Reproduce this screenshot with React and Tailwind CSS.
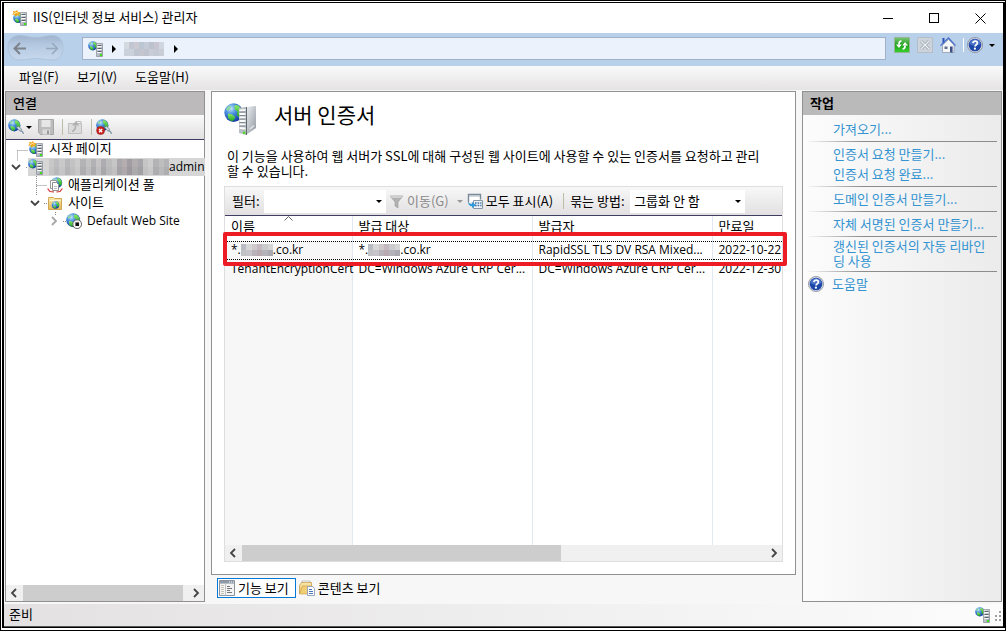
import React, { useState } from "react";
import { clsx } from "clsx";

// Shared gradients, referenced by the icons below
const IconDefs = () => (
  <svg width="0" height="0" className="absolute" aria-hidden="true">
    <defs>
      <radialGradient id="sea" cx="35%" cy="28%" r="75%">
        <stop offset="0" stopColor="#c4e8fc" />
        <stop offset="0.4" stopColor="#4a90e0" />
        <stop offset="1" stopColor="#1238a0" />
      </radialGradient>
      <linearGradient id="land" x1="0" y1="0" x2="0" y2="1">
        <stop offset="0" stopColor="#8de868" />
        <stop offset="1" stopColor="#1fa526" />
      </linearGradient>
      <linearGradient id="steel" x1="0" y1="0" x2="1" y2="1">
        <stop offset="0" stopColor="#eef1f4" />
        <stop offset="1" stopColor="#8f979f" />
      </linearGradient>
      <linearGradient id="gold" x1="0" y1="0" x2="0" y2="1">
        <stop offset="0" stopColor="#fbe9ae" />
        <stop offset="1" stopColor="#e4bb5c" />
      </linearGradient>
      <linearGradient id="leaf" x1="0" y1="0" x2="0" y2="1">
        <stop offset="0" stopColor="#7cc576" />
        <stop offset="0.5" stopColor="#1fa01c" />
        <stop offset="1" stopColor="#35d22c" />
      </linearGradient>
      <linearGradient id="pill" x1="0" y1="0" x2="0" y2="1">
        <stop offset="0" stopColor="#9fb4cc" />
        <stop offset="0.35" stopColor="#b3c8e0" />
        <stop offset="1" stopColor="#c6d8ed" />
      </linearGradient>
    </defs>
  </svg>
);

const Icon = ({ size = 16, children }) => (
  <svg width={size} height={size} viewBox="0 0 16 16" className="shrink-0" aria-hidden="true">
    {children}
  </svg>
);

const Globe = ({ x = 0, y = 0, scale = 1 }) => (
  <g transform={`translate(${x} ${y}) scale(${scale})`}>
    <circle cx="6" cy="6" r="5.8" fill="url(#sea)" />
    <path d="M6.6 1.2l2.4.3 2 2.2.6 2.3-.6 2.4-1.6.8-1.4-1.800.4-2-1.800-1.600z" fill="url(#land)" />
    <path d="M2.400 6.600l2.400.4 2.200 1.600-.8 2.400-2 .2-1.600-1.800z" fill="url(#land)" />
    <path d="M1.200 3.800L3 1.800l1.600.2L3.800 4l-1.600.8z" fill="#8fd9a0" />
  </g>
);

const ServerBox = () => (
  <g>
    <path d="M8.500 2.500h6v13h-6z" fill="url(#steel)" stroke="#858d96" strokeWidth="0.700" />
    <path d="M9.500 4.500h4M9.500 7.500h4M9.500 10.500h4" stroke="#5a626b" />
    <path d="M9.500 5.500h4M9.500 8.500h4M9.500 11.500h4" stroke="#fff" />
    <path d="M12 13h2v2h-2z" fill="#3fe01a" />
  </g>
);

const ServerIcon = () => (
  <Icon>
    <Globe scale={0.8} />
    <ServerBox />
  </Icon>
);

const HomeServerIcon = () => (
  <Icon>
    <Globe x={1} y={2.500} scale={0.9} />
    <path d="M0 4.600L1.600 3 1 .8l2.200.8L5 0l1 2 2.400.2L7 4.400l.4 1.400-2-.6-2 1.400-.6-1.800z" fill="#f2a51d" />
    <path d="M2 3.600l2.600-1.200 1.600 1" stroke="#fff0b5" fill="none" />
    <ServerBox />
  </Icon>
);

const ConnectIcon = ({ error }) => (
  <Icon>
    <Globe scale={1.05} />
    <path d="M8.400 8.400l2.200-1.200 3 3-1.400 2.200z" fill="#ccd7e0" stroke="#64788c" strokeWidth="0.700" />
    <path d="M12.600 11.600c2 .4 2.600 1.600 2.800 3.400" stroke="#8195a6" strokeWidth="1.200" fill="none" />
    {error && (
      <g>
        <circle cx="4.600" cy="11.600" r="4" fill="#c9221c" stroke="#8d1411" strokeWidth="0.500" />
        <path d="M3 10l3.200 3.200M6.200 10L3 13.200" stroke="#fff" strokeWidth="1.300" />
      </g>
    )}
  </Icon>
);

const SaveIcon = () => (
  <Icon>
    <path d="M.5.500h15v15h-13l-2-2z" fill="#bcbcbc" stroke="#a6a6a6" />
    <path d="M3.500 1h9v7h-9z" fill="#e6e6e6" />
    <path d="M4.500 10.500h7.500v5H4.500z" fill="#dcdcdc" />
    <path d="M9 11.500h2v3.500H9z" fill="#999" />
  </Icon>
);

const FolderUpIcon = () => (
  <Icon>
    <path d="M1.500 4.500h13v10h-13z" fill="#dcdcdc" stroke="#bfbfbf" />
    <path d="M9 2.500h5v2" stroke="#bfbfbf" fill="none" />
    <path d="M5 12.500c2.400-1 3.600-3 3.600-6" stroke="#b0b0b0" strokeWidth="1.600" fill="none" />
    <path d="M5 6.500L9 2l3 4.500z" fill="#b0b0b0" />
  </Icon>
);

const PoolIcon = () => (
  <Icon>
    <Globe x={4} y={0} scale={0.95} />
    <path d="M3.500 3.500h6v8h-6z" fill="#fff" stroke="#9a9a9a" />
    <path d="M5.500 5.500h4l2 2v6h-6z" fill="#fff" stroke="#8f8f8f" />
    <path d="M7 9.500h3M7 11.500h3" stroke="#bbb" />
    <path d="M.6 11.500L3 14.500l4 .5M15.400 11.500L13 14.500 9.500 15" stroke="#cf2b2b" strokeWidth="1.200" fill="none" />
  </Icon>
);

const SitesIcon = () => (
  <Icon>
    <path d="M1.500 3.500v-1h5l1 1h7v11h-13z" fill="url(#gold)" stroke="#d0a551" />
    <path d="M2.500 5.500h11" stroke="#fff4cf" />
    <Globe x={4.600} y={6} scale={0.65} />
  </Icon>
);

const StoppedSiteIcon = () => (
  <Icon>
    <Globe scale={1.200} />
    <circle cx="11.200" cy="11.200" r="4.400" fill="#f4f4f4" stroke="#555" strokeWidth="0.900" />
    <path d="M9.400 9.400h3.600v3.600H9.400z" fill="#111" />
  </Icon>
);

const HelpIcon = () => (
  <Icon>
    <circle cx="8" cy="8" r="7.600" fill="#d5d8de" stroke="#6e7686" strokeWidth="0.600" />
    <circle cx="8" cy="8" r="6.300" fill="#1d47a8" />
    <path d="M2.400 7a5.700 5.700 0 0 1 11.200 0C10 9 6 9 2.400 7z" fill="#4a72c8" />
    <path d="M5.900 6.200c.2-1.400 1.100-2 2.300-2 1.300 0 2.200.7 2.200 1.800 0 1.700-2.200 1.700-2.400 3.500" stroke="#fff" strokeWidth="1.700" fill="none" />
    <circle cx="7.900" cy="11.700" r="1.100" fill="#fff" />
  </Icon>
);

const RefreshIcon = () => (
  <Icon>
    <path d="M.5.500h15v15H.5z" fill="url(#leaf)" stroke="#93b593" />
    <path d="M7.500 4c-2 0-2.600 1-2.600 3.500M8.500 12c2 0 2.600-1 2.600-3.500" stroke="#fff" strokeWidth="1.700" fill="none" />
    <path d="M2 7.500h5.800L4.900 11zM8.200 8.500H14L11.100 5z" fill="#fff" />
  </Icon>
);

const StopIcon = () => (
  <Icon>
    <path d="M.5.500h15v15H.5z" fill="#ccd3da" stroke="#b5bec8" />
    <path d="M4 4l8 8M12 4l-8 8" stroke="#98a2ad" strokeWidth="2.800" />
    <path d="M4 4l8 8M12 4l-8 8" stroke="#f0f2f4" strokeWidth="1.300" />
  </Icon>
);

const HomeIcon = () => (
  <Icon>
    <path d="M2.500 1v6h2V1z" fill="#2b50b8" />
    <path d="M2.500 8L8.500 2.500 14 8v7.500H2.500z" fill="#f5f6f8" stroke="#8992a0" strokeWidth="0.700" />
    <path d="M.5 8.600L8.500 1l7 7.600" stroke="#4a70cc" strokeWidth="1.300" fill="none" />
    <path d="M4.500 9.500h3V12h-3z" fill="#65718a" />
    <path d="M10 9.500h2.600v6H10z" fill="#3c4f86" />
  </Icon>
);

const FunnelIcon = () => (
  <Icon>
    <path d="M1 3h13l-5 6v6l-3-2V9z" fill="#b2b2b2" stroke="#9b9b9b" strokeWidth="0.600" />
    <ellipse cx="7.500" cy="3.500" rx="6.300" ry="1.600" fill="#d0d0d0" />
  </Icon>
);

const ShowAllIcon = () => (
  <Icon>
    <path d="M1.500 9.500v-8h12v5" fill="#fff" stroke="#7b8a98" strokeWidth="1.400" />
    <path d="M2 3h11" stroke="#a5b1bc" />
    <path d="M6.500 7.500h9v8h-9z" fill="#eef2f6" stroke="#8796a4" />
    <path d="M8 10h1.600m1 0h1.600m1 0h1.300M8 12.500h1.600m1 0h1.600m1 0h1.300" stroke="#3c6da5" strokeWidth="1.400" />
    <path d="M1 9c.4 3 2 4.200 4 4.200V15l4-3-4-3v1.800C3.400 10.800 2 10.400 1 9z" fill="#2e9ad8" />
  </Icon>
);

const FeaturesIcon = () => (
  <Icon>
    <path d="M.5.500h15v15H.5z" fill="#f4f4f4" stroke="#8b949d" />
    <path d="M1 1h14v2.600H1z" fill="#8d9aa8" />
    <path d="M10 2h1m1 0h1m1 0h1" stroke="#fff" />
    <path d="M2 5.500h3M2 7.500h3M2 9.500h3M2 11.500h3M2 13.500h3" stroke="#c4c0b4" />
    <path d="M6.500 4v11.500" stroke="#c3c3c3" />
    <path d="M8 6.500h3M8 8.500h5M8 10.500h3M8 12.500h5" stroke="#777" />
  </Icon>
);

const ContentIcon = () => (
  <Icon>
    <path d="M3 1h8v5H3z" fill="#fff" stroke="#aaa" strokeWidth="0.700" />
    <path d="M.5 5.500l2-3h10v11h-12z" fill="url(#gold)" stroke="#c09541" strokeWidth="0.700" />
    <path d="M3.500 6h10l-3 8H.6z" fill="#f0ce74" stroke="#c9a04c" strokeWidth="0.600" />
    <path d="M8.500 6.500h5l2 2v7h-7z" fill="#fff" stroke="#7f93b5" strokeWidth="0.800" />
    <path d="M10 9.500h3M10 11.500h4M10 13.500h4" stroke="#4876bb" />
  </Icon>
);

const CertificatesIcon = () => (
  <svg width="36" height="36" viewBox="0 0 36 36" className="shrink-0" aria-hidden="true">
    <Globe x={0} y={1} scale={1.600} />
    <path d="M22 5l10-1v22l-10 7z" fill="url(#steel)" />
    <path d="M15 6l7-1v28l-7-2z" fill="#b6bdc4" />
    <path d="M15.500 8.500l6-.5M15.500 12h6M15.500 15.500h6M15.500 19h6M15.500 22.500h6M15.500 26l6 .5" stroke="#fbfcfc" strokeWidth="1.800" />
    <path d="M15.500 10h6M15.500 13.500h6M15.500 17h6M15.500 20.500h6M15.500 24h6" stroke="#727b84" strokeWidth="0.800" />
    <path d="M22.500 5v28" stroke="#5f676f" />
    <path d="M19 29.500h2.500V32H19z" fill="#57d82a" />
    <path d="M26 27l4-3.500" stroke="#e3e6e9" strokeWidth="1.500" />
  </svg>
);

const Caret = ({ right, muted }) => (
  <svg
    width={right ? 4 : 6}
    height={right ? 8 : 3}
    viewBox={right ? "0 0 4 8" : "0 0 6 3"}
    className={clsx("pointer-events-none shrink-0", muted ? "fill-[#999]" : "fill-black")}
    aria-hidden="true"
  >
    <path d={right ? "M0 0l4 4-4 4z" : "M0 0h6L3 3z"} />
  </svg>
);

const Chevron = ({ path, color = "#444" }) => (
  <svg width="10" height="10" viewBox="0 0 10 10" className="shrink-0" aria-hidden="true">
    <path d={path} stroke={color} strokeWidth="1.800" fill="none" />
  </svg>
);

const LEFT = "M7 1L3 5l4 4";
const RIGHT = "M3 1l4 4-4 4";
const DOWN = "M1 3l4 4 4-4";

const Divider = () => <span className="h-4 w-px shrink-0 bg-[#bdbda6]" />;

// Pixelated strip that hides a private name
const Mosaic = ({ colors, cell, className }) => (
  <svg
    viewBox={`0 0 ${(colors.length / 2) * cell} ${cell * 2}`}
    preserveAspectRatio="none"
    shapeRendering="crispEdges"
    className={clsx("shrink-0", className)}
    aria-hidden="true"
  >
    {colors.map((color, i) => (
      <rect key={i} x={Math.floor(i / 2) * cell} y={(i % 2) * cell} width={cell} height={cell} fill={color} />
    ))}
  </svg>
);

const pathColors = ["#d5d9e0", "#cbd1da", "#c1c6d1", "#cbd1da", "#cbc9d2", "#bfc5d0", "#bcc6d3", "#c4c5cf", "#c6ccd7", "#bfc3ce", "#bdc3ce", "#c8ccd6", "#c8c5d0", "#c3cad4", "#d0d6df", "#c8cdd6"];
const serverColors = [
  "#c8c8c8", "#c4c4c4", "#bdbdbf", "#b9b9bb", "#c9c9ca", "#c5c5c6", "#b8b7ba", "#b4b3b6", "#c3c3c4", "#bfbfc0",
  "#cccccc", "#c8c8c8", "#b3b2b5", "#aeadb1", "#c4c3c4", "#bebdbf", "#b2b1b4", "#acabaf", "#c6c5c6", "#c0bfc1",
  "#aeacb0", "#a8a7ab", "#bebdbe", "#b9b8ba", "#c7c6c7", "#c2c1c2", "#a9a7ac", "#a4a2a7", "#b4aeb1", "#aea8ac",
  "#a29da3", "#9c989e", "#b1adb0", "#aca9ac", "#a6a5a9", "#a1a0a5", "#c5c5c6", "#c1c1c2", "#cdcdcd", "#c9c9c9",
  "#b3b2b5", "#adacb0", "#bfbebf", "#b9b8ba", "#b4b3b5", "#aeadb0",
];
const nameColors = ["#b9bdc3", "#c2c1c3", "#d7d7d8", "#c6c4c8", "#d0c9cc", "#b9b2ba", "#c3b9be", "#b9a9b0", "#cbcbcd", "#b5b3ba", "#d5d5d6", "#aaa9b2"];

const HScrollbar = ({ thumbClass }) => (
  <div className="flex h-4 shrink-0 items-center bg-[#f0f0f0]">
    <button type="button" aria-label="왼쪽으로 스크롤" className="flex w-4 justify-center">
      <Chevron path={LEFT} />
    </button>
    <div className="h-full flex-1 px-px">
      <div className={clsx("h-full bg-[#cdcdcd]", thumbClass)} />
    </div>
    <button type="button" aria-label="오른쪽으로 스크롤" className="flex w-4 justify-center">
      <Chevron path={RIGHT} />
    </button>
  </div>
);

const TitleBar = () => (
  <header className="flex h-[30px] shrink-0 items-center bg-white pl-2">
    <HomeServerIcon />
    <h1 className="ml-[5px] flex-1 pb-0.5">IIS(인터넷 정보 서비스) 관리자</h1>
    <button type="button" aria-label="최소화" className="flex h-full w-[46px] items-center justify-center">
      <span className="h-px w-2.5 bg-black" />
    </button>
    <button type="button" aria-label="최대화" className="flex h-full w-[46px] items-center justify-center">
      <span className="size-2.5 border border-black" />
    </button>
    <button type="button" aria-label="닫기" className="flex h-full w-[46px] items-center justify-center">
      <svg width="11" height="11" viewBox="0 0 11 11" aria-hidden="true">
        <path d="M.5.500l10 10M10.500.500l-10 10" stroke="#000" />
      </svg>
    </button>
  </header>
);

const AddressBar = () => (
  <nav className="flex h-[33px] shrink-0 items-start bg-[#b9d0ea] pt-1 pr-2 pl-0.5">
    <button type="button" aria-label="뒤로 및 앞으로" className="-mt-1 shrink-0">
      <svg width="60" height="28" viewBox="0 0 60 28" aria-hidden="true">
        <path
          d="M14 2.500C5 2.500 2 8 2 14.500S6 27 14 27c6 0 9-1.500 16-1.500S40 27 46 27c8 0 11-6 11-12.500S54 2.500 46 2.500c-6 0-9 2-16 2s-10-2-16-2z"
          fill="url(#pill)"
          stroke="#aabfd8"
          strokeWidth="0.800"
        />
        <path d="M20 15.500H9M14 10L8.500 15.500l5.500 5.500" stroke="#7d838c" strokeWidth="2" fill="none" />
        <path d="M40 15.500h11M46 10l5.500 5.500L46 21" stroke="#97a8bd" strokeWidth="1.500" fill="none" />
      </svg>
    </button>
    <div className="ml-4 flex h-[23px] min-w-0 flex-1 items-center border border-[#9fb2c9] bg-[#ebf2fb] pl-[5px]">
      <ServerIcon />
      <span className="ml-2 flex"><Caret right /></span>
      <Mosaic colors={pathColors} cell={5} className="ml-2 h-3.5 w-10" />
      <span className="ml-2.5 flex"><Caret right /></span>
    </div>
    <div className="ml-2 flex items-center gap-[7px]">
      <button type="button" aria-label="새로 고침"><RefreshIcon /></button>
      <button type="button" aria-label="중지" disabled><StopIcon /></button>
      <button type="button" aria-label="홈"><HomeIcon /></button>
      <span className="h-3.5 w-px bg-white" />
      <button type="button" aria-label="도움말" className="-ml-1 flex items-center gap-1.5">
        <HelpIcon />
        <Caret />
      </button>
    </div>
  </nav>
);

const MenuBar = () => (
  <div className="flex h-6 shrink-0 items-center bg-linear-to-b from-[#fafafa] to-[#e5e3e4] pb-0.5 pl-1.5">
    {["파일(F)", "보기(V)", "도움말(H)"].map((label) => (
      <button key={label} type="button" className="px-[9px]">{label}</button>
    ))}
  </div>
);

const treeItems = [
  { level: 0, icon: <HomeServerIcon />, label: "시작 페이지" },
  { level: 0, icon: <ServerIcon />, label: "admin", masked: true, latin: true, chevron: DOWN },
  { level: 1, icon: <PoolIcon />, label: "애플리케이션 풀" },
  { level: 1, icon: <SitesIcon />, label: "사이트", chevron: DOWN },
  { level: 2, icon: <StoppedSiteIcon />, label: "Default Web Site", latin: true, chevron: RIGHT, light: true },
];

const indent = ["pl-[5px]", "pl-6", "pl-[43px]"];

const ConnectionsPanel = () => (
  <aside className="flex w-[200px] shrink-0 flex-col border border-[#919191] bg-white">
    <h2 className="h-[23px] shrink-0 bg-[#bdbabc] pl-[7px] leading-[22px] font-medium">연결</h2>
    <div className="flex h-[25px] shrink-0 items-center border-b border-[#3f3d63] bg-linear-to-b from-[#fafafa] to-[#e2e0e1] pl-0.5">
      <button type="button" aria-label="연결 만들기" className="flex items-center gap-0.5">
        <ConnectIcon />
        <Caret />
      </button>
      <button type="button" aria-label="연결 저장" className="mr-2 ml-1.5" disabled><SaveIcon /></button>
      <Divider />
      <button type="button" aria-label="위로" className="mr-2 ml-1" disabled><FolderUpIcon /></button>
      <Divider />
      <button type="button" aria-label="연결 끊기" className="ml-1"><ConnectIcon error /></button>
    </div>
    <div className="relative flex-1">
      <svg width="80" height="90" className="absolute top-0 left-0" aria-hidden="true">
        <path
          d="M11.500 10.500V21M11.500 10.500H22M20 27.500H23M30.500 36V56M30.500 45.500H41M38 63.500H41M49.500 72V76M57 81.500H60"
          stroke="#8a8a8a"
          strokeDasharray="1 1"
          fill="none"
        />
      </svg>
      <ul className="relative">
        {treeItems.map((item) => (
          <li key={item.label} className={clsx("flex h-[18px] items-center", indent[item.level])}>
            <span className="flex w-[17px] shrink-0">
              {item.chevron && <Chevron path={item.chevron} color={item.light ? "#a6a6a6" : "#444"} />}
            </span>
            <span className={clsx("flex h-full items-center gap-[5px] whitespace-nowrap", item.masked && "flex-1 bg-[#d6d6d6]")}>
              {item.icon}
              <span className={clsx("flex items-center", item.latin ? "font-['Open_Sans',sans-serif] text-xs" : "pb-0.5")}>
                {item.masked && <Mosaic colors={serverColors} cell={5} className="h-4 w-[120px]" />}
                {item.label}
              </span>
            </span>
          </li>
        ))}
      </ul>
    </div>
    <HScrollbar thumbClass="w-full max-w-[160px]" />
  </aside>
);

const certificates = [
  { name: ".co.kr", subject: ".co.kr", issuer: "RapidSSL TLS DV RSA Mixed...", expires: "2022-10-22", masked: true },
  { name: "TenantEncryptionCert", subject: "DC=Windows Azure CRP Cer...", issuer: "DC=Windows Azure CRP Cer...", expires: "2022-12-30" },
];

const Masked = ({ text }) => (
  <span className="flex items-center">
    *.
    <Mosaic colors={nameColors} cell={6} className="h-3 w-8" />
    {text}
  </span>
);

const CertificateTable = () => (
  <div className="relative min-h-0 flex-1">
    <div className="absolute inset-0 overflow-hidden">
      <table className="h-full w-[640px] table-fixed border-collapse text-left whitespace-nowrap">
        <colgroup>
          <col className="w-[127px] bg-[#f7f7f7]" />
          <col className="w-[180px]" />
          <col className="w-[180px]" />
          <col />
        </colgroup>
        <thead>
          <tr className="h-[25px] bg-white align-top">
            {["이름", "발급 대상", "발급자", "만료일"].map((title, i) => (
              <th key={title} className="relative border-r border-[#e2e8f2] pl-1.5 leading-5 font-normal">
                {title}
                {i === 0 && (
                  <svg width="9" height="5" viewBox="0 0 9 5" className="absolute top-0 left-[59px]" aria-hidden="true">
                    <path d="M.5 4.500l4-4 4 4" stroke="#666" fill="none" />
                  </svg>
                )}
              </th>
            ))}
          </tr>
        </thead>
        <tbody className="font-['Open_Sans',sans-serif] text-xs">
          {certificates.map((cert) => (
            <tr key={cert.expires} className={cert.masked ? "h-[18px] border-y border-dotted border-black" : "h-5"}>
              <td className="border-r border-[#e2e8f2] pl-1.5">{cert.masked ? <Masked text={cert.name} /> : cert.name}</td>
              <td className="border-r border-[#e2e8f2] pl-1.5">{cert.masked ? <Masked text={cert.subject} /> : cert.subject}</td>
              <td className="border-r border-[#e2e8f2] pl-1.5">{cert.issuer}</td>
              <td className="pl-1.5">{cert.expires}</td>
            </tr>
          ))}
          <tr>
            <td className="border-r border-[#e2e8f2]" />
            <td className="border-r border-[#e2e8f2]" />
            <td className="border-r border-[#e2e8f2]" />
            <td />
          </tr>
        </tbody>
      </table>
    </div>
    <div className="pointer-events-none absolute top-4 -right-[5px] -left-0.5 h-[34px] rounded-xs border-4 border-[#ed1c24]" />
  </div>
);

const Toolbar = () => (
  <div className="flex h-[29px] shrink-0 items-center overflow-hidden border-b border-[#3f3d63] bg-linear-to-b from-[#f8f8f8] to-[#e2e0e1] pl-[7px] whitespace-nowrap">
    <label htmlFor="filter" className="w-8">필터:</label>
    <span className="relative flex items-center">
      <select id="filter" className="h-[23px] w-[122px] appearance-none bg-white pl-1 outline-none" />
      <span className="pointer-events-none absolute right-1"><Caret /></span>
    </span>
    <button type="button" disabled className="ml-[3px] flex items-center gap-0.5 text-[#8a8a8a]">
      <FunnelIcon />
      이동(G)
      <span className="ml-1.5"><Caret muted /></span>
    </button>
    <button type="button" className="ml-1 flex items-center gap-[3px]">
      <ShowAllIcon />
      모두 표시(A)
    </button>
    <span className="mr-1.5 ml-2.5 flex"><Divider /></span>
    <label htmlFor="group" className="w-[60px]">묶는 방법:</label>
    <span className="relative flex items-center">
      <select id="group" className="h-[23px] w-[115px] appearance-none bg-white pl-1 outline-none">
        <option>그룹화 안 함</option>
      </select>
      <span className="pointer-events-none absolute right-1"><Caret /></span>
    </span>
  </div>
);

const FeaturePanel = () => {
  const [tab, setTab] = useState("features");

  return (
    <main className="flex min-w-0 flex-1 flex-col">
      <section className="flex min-h-0 flex-1 flex-col border border-[#919191] bg-white px-3 pt-2.5 pb-3">
        <div className="flex shrink-0 items-start">
          <CertificatesIcon />
          <h2 className="ml-3.5 text-[21px] leading-6">서버 인증서</h2>
        </div>
        <p className="mt-2.5 mb-2 pr-5 pl-[3px] leading-[15px]">
          이 기능을 사용하여 웹 서버가 SSL에 대해 구성된 웹 사이트에 사용할 수 있는 인증서를 요청하고 관리할 수 있습니다.
        </p>
        <div className="flex min-h-0 flex-1 flex-col border border-[#dedede]">
          <Toolbar />
          <CertificateTable />
          <HScrollbar thumbClass="w-[61%]" />
        </div>
      </section>
      <div className="flex h-[27px] shrink-0 items-center gap-0.5 pb-0.5 pl-1.5">
        <button
          type="button"
          onClick={() => setTab("features")}
          className={clsx("flex h-5 items-center gap-[3px] border px-px pr-1.5", tab === "features" ? "border-[#0078d7] bg-white" : "border-transparent")}
        >
          <FeaturesIcon />
          기능 보기
        </button>
        <button
          type="button"
          onClick={() => setTab("content")}
          className={clsx("flex h-5 items-center gap-[3px] border pr-1.5", tab === "content" ? "border-[#0078d7] bg-white" : "border-transparent")}
        >
          <ContentIcon />
          콘텐츠 보기
        </button>
      </div>
    </main>
  );
};

const actionGroups = [
  ["가져오기..."],
  ["인증서 요청 만들기...", "인증서 요청 완료..."],
  ["도메인 인증서 만들기..."],
  ["자체 서명된 인증서 만들기..."],
];

const ActionRule = () => <div className="mr-1 ml-0.5 h-px bg-linear-to-r from-transparent to-[#8c8c8c] to-30%" />;

const ActionsPanel = () => (
  <aside className="w-[200px] shrink-0 border border-[#919191] bg-linear-to-r from-[#fcfcfc] to-[#ebebeb]">
    <h2 className="h-[23px] bg-[#bababa] pl-[7px] leading-[22px] font-bold">작업</h2>
    <div className="pt-0.5 text-[#3494d1]">
      {actionGroups.map((group) => (
        <div key={group[0]}>
          <div className="py-0.5 pl-[30px] leading-5">
            {group.map((label) => (
              <a key={label} href="#" className="block">{label}</a>
            ))}
          </div>
          <ActionRule />
        </div>
      ))}
      <a href="#" className="block pt-px pr-2 pb-[3px] pl-[30px] leading-[15px] break-all">갱신된 인증서의 자동 리바인딩 사용</a>
      <ActionRule />
      <a href="#" className="flex items-center gap-2 py-0.5 pl-[5px] leading-5">
        <HelpIcon />
        도움말
      </a>
    </div>
  </aside>
);

const StatusBar = () => (
  <footer className="flex h-[23px] shrink-0 items-center justify-between border-b border-[#555] bg-linear-to-r from-[#e3e1e2] to-[#fcfcfc] pr-0.5 pl-[5px]">
    <span className="pb-0.5">준비</span>
    <span className="flex items-end gap-0.5">
      <ServerIcon />
      <svg width="8" height="12" viewBox="0 0 8 12" className="fill-[#a0a0a0]" aria-hidden="true">
        <path d="M6 0h2v2H6zM6 4h2v2H6zM2 4h2v2H2zM6 8h2v2H6zM2 8h2v2H2z" />
      </svg>
    </span>
  </footer>
);

const App = () => (
  <div className="flex h-screen flex-col border border-black bg-white pt-px pb-0.5 pl-px font-['Noto_Sans_CJK_KR',sans-serif] text-[13px] leading-4 text-black">
    <IconDefs />
    <div className="flex min-h-0 flex-1 flex-col border border-x-2 border-black">
      <TitleBar />
      <AddressBar />
      <MenuBar />
      <div className="flex min-h-0 flex-1 gap-1.5 bg-[#f7f7f7] px-px pt-px pb-0.5">
        <ConnectionsPanel />
        <FeaturePanel />
        <ActionsPanel />
      </div>
      <StatusBar />
    </div>
  </div>
);

export default App;
